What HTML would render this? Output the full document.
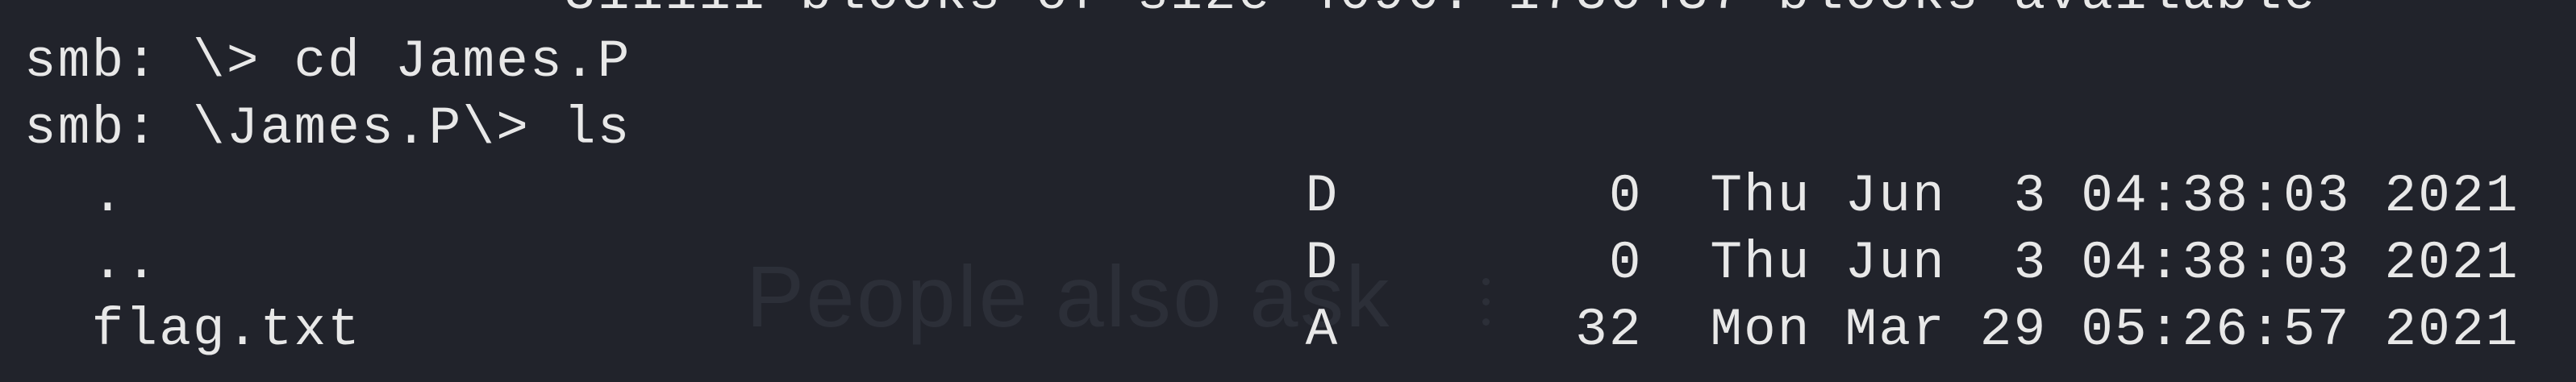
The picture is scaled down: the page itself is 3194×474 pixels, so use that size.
<!DOCTYPE html>
<html><head><style>
html,body{margin:0;padding:0;width:3194px;height:474px;overflow:hidden;background:#21232b;}
.t{position:absolute;left:30px;font-family:"Liberation Mono",monospace;font-size:66px;letter-spacing:2.2px;color:#e8e8e8;white-space:pre;line-height:83px;}
.p{position:absolute;left:925px;top:298px;font-family:"Liberation Sans",sans-serif;font-size:108px;color:#2c2f38;white-space:pre;line-height:140px;letter-spacing:2.5px;}
.d{position:absolute;left:1838px;width:9px;height:9px;background:#2c2f38;border-radius:50%;}
</style></head><body>
<div class="p">People also ask</div>
<div class="d" style="top:345px"></div><div class="d" style="top:370px"></div><div class="d" style="top:395px"></div>
<div class="t" style="top:-49px">                311111 blocks of size 4096. 1736437 blocks available</div>
<div class="t" style="top:35px">smb: \&gt; cd James.P</div>
<div class="t" style="top:118px">smb: \James.P\&gt; ls</div>
<div class="t" style="top:202px">  .                                   D        0  Thu Jun  3 04:38:03 2021</div>
<div class="t" style="top:285px">  ..                                  D        0  Thu Jun  3 04:38:03 2021</div>
<div class="t" style="top:368px">  flag.txt                            A       32  Mon Mar 29 05:26:57 2021</div>
</body></html>
